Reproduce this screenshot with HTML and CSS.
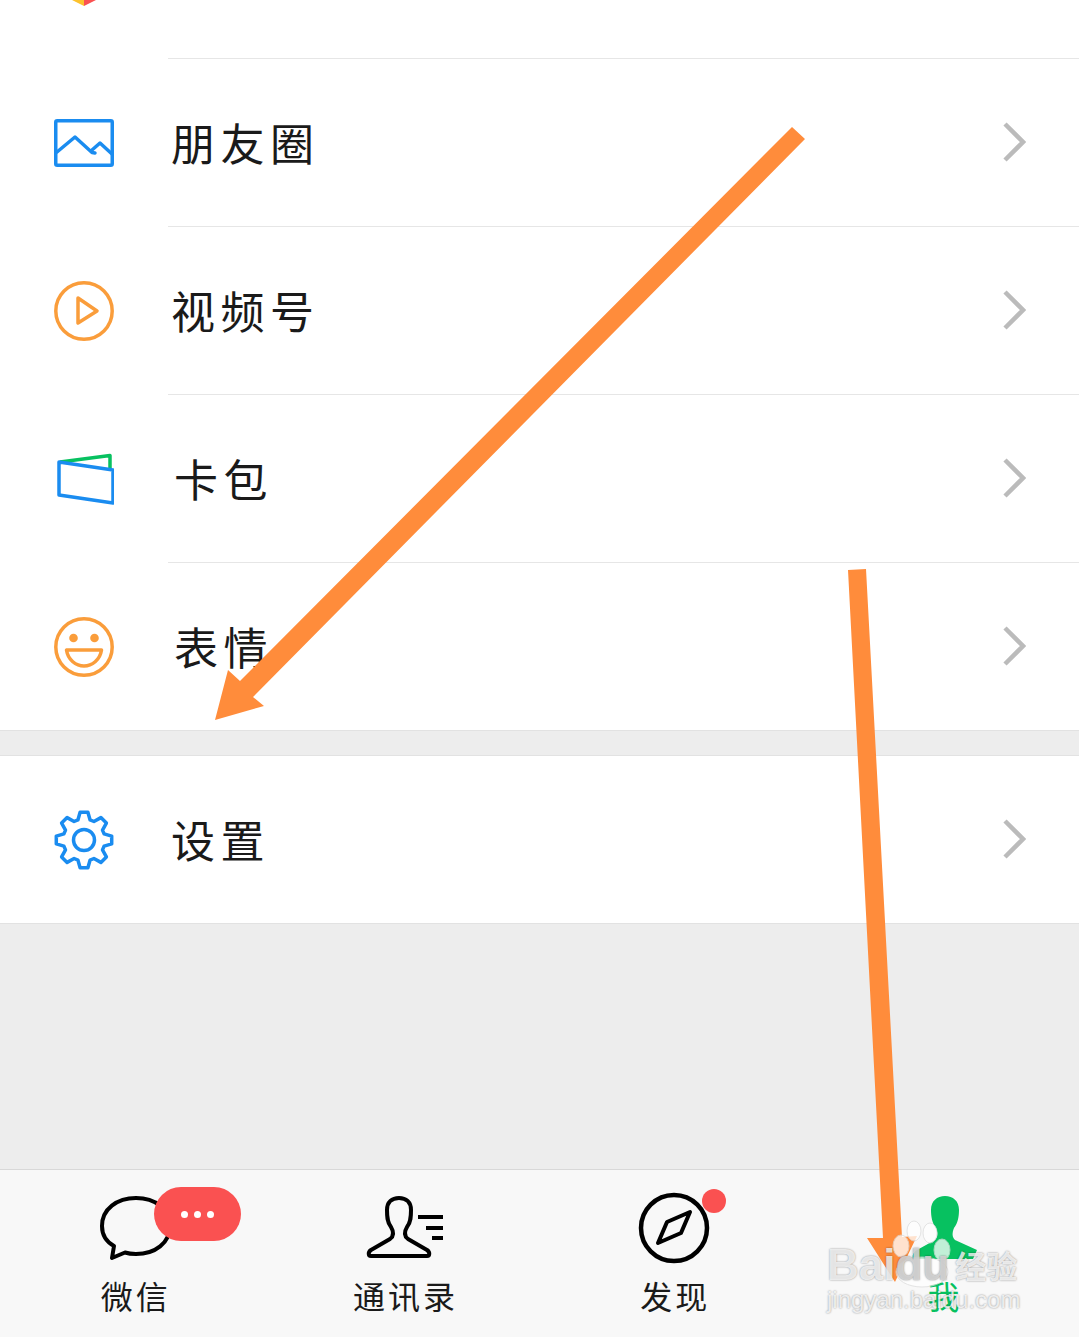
FILE: index.html
```html
<!DOCTYPE html>
<html lang="zh-CN">
<head>
    <meta charset="UTF-8">
    <meta name="viewport" content="width=device-width, initial-scale=1.0">
    <title>我</title>
    <link rel="stylesheet" href="styles.css">
</head>
<body>

<div class="page">
    <!-- Row cut off by the top of the screen -->
    <div class="stub">
        <svg class="stub-icon" width="24" height="8" viewBox="0 0 24 8">
            <path d="M0 0L12 6V0Z" fill="#fcc22d"/>
            <path d="M12 0V6L24 0Z" fill="#fa5151"/>
        </svg>
    </div>

    <div class="group">
        <div class="row">
            <div class="row-icon">
                <svg width="60" height="48" viewBox="0 0 60 48" fill="none" stroke="#1a8cf0" stroke-width="3.5" stroke-linejoin="round" stroke-linecap="round">
                    <rect x="1.75" y="1.75" width="56.5" height="44.5" rx="1.5"/>
                    <path d="M3 33L21 18L38 33.5L41 34"/>
                    <path d="M38 31L46 24L58 35"/>
                </svg>
            </div>
            <div class="row-body">
                <span class="row-label">朋友圈</span>
                <svg class="chevron" width="24" height="42" viewBox="0 0 24 42"><path d="M3 3L21 21L3 39"/></svg>
            </div>
        </div>
        <div class="row">
            <div class="row-icon">
                <svg width="60" height="60" viewBox="0 0 60 60" fill="none" stroke="#fa9d3b" stroke-width="3.5" stroke-linejoin="round">
                    <circle cx="30" cy="30" r="28.2"/>
                    <path d="M24 17L43 30L24 42Z"/>
                </svg>
            </div>
            <div class="row-body">
                <span class="row-label">视频号</span>
                <svg class="chevron" width="24" height="42" viewBox="0 0 24 42"><path d="M3 3L21 21L3 39"/></svg>
            </div>
        </div>
        <div class="row">
            <div class="row-icon">
                <svg width="60" height="52" viewBox="0 0 60 52" fill="none" stroke-width="3.5" stroke-linejoin="round">
                    <path d="M6 9L56 2.5V15" stroke="#07c160"/>
                    <path d="M5 9L59 17V50L5 42Z" stroke="#1a8cf0"/>
                </svg>
            </div>
            <div class="row-body">
                <span class="row-label label-inset">卡包</span>
                <svg class="chevron" width="24" height="42" viewBox="0 0 24 42"><path d="M3 3L21 21L3 39"/></svg>
            </div>
        </div>
        <div class="row">
            <div class="row-icon">
                <svg width="60" height="60" viewBox="0 0 60 60" fill="none" stroke="#fa9d3b" stroke-width="3.5" stroke-linejoin="round">
                    <circle cx="30" cy="30" r="28.2"/>
                    <circle cx="19.5" cy="21" r="4.3" fill="#fa9d3b" stroke="none"/>
                    <circle cx="40.5" cy="21" r="4.3" fill="#fa9d3b" stroke="none"/>
                    <path d="M12.5 33H47.5C46 43 38 49 30 49S14 43 12.5 33Z"/>
                </svg>
            </div>
            <div class="row-body">
                <span class="row-label label-inset">表情</span>
                <svg class="chevron" width="24" height="42" viewBox="0 0 24 42"><path d="M3 3L21 21L3 39"/></svg>
            </div>
        </div>
    </div>

    <div class="group group-settings">
        <div class="row">
            <div class="row-icon">
                <svg width="60" height="60" viewBox="0 0 60 60" fill="none" stroke="#1a8cf0" stroke-width="3.5" stroke-linejoin="round">
                    <path d="M26.1 2.3H33.9L36.1 9.9L39.9 11.5L46.9 7.6L52.4 13.1L48.5 20.1L50.1 23.9L57.7 26.1V33.9L50.1 36.1L48.5 39.9L52.4 46.9L46.9 52.4L39.9 48.5L36.1 50.1L33.9 57.7H26.1L23.9 50.1L20.1 48.5L13.1 52.4L7.6 46.9L11.5 39.9L9.9 36.1L2.3 33.9V26.1L9.9 23.9L11.5 20.1L7.6 13.1L13.1 7.6L20.1 11.5L23.9 9.9Z"/>
                    <circle cx="30" cy="30" r="10.5"/>
                </svg>
            </div>
            <div class="row-body">
                <span class="row-label">设置</span>
                <svg class="chevron" width="24" height="42" viewBox="0 0 24 42"><path d="M3 3L21 21L3 39"/></svg>
            </div>
        </div>
    </div>

    <div class="spacer"></div>

    <!-- Bottom tabs -->
    <div class="tabbar">
        <div class="tab">
            <svg class="tab-icon" width="74" height="68" viewBox="-1 0 74 68" fill="none" stroke="#000" stroke-width="4" stroke-linejoin="round">
                <path d="M15 52C6 47 3 40 3 32C3 15 18 4 37 4C56 4 71 15 71 32C71 49 56 60 37 60C33 60 29 59.5 26 58.5L13 64Z"/>
            </svg>
            <span class="tab-label">微信</span>
            <div class="badge-pill"><i></i><i></i><i></i></div>
        </div>
        <div class="tab">
            <svg class="tab-icon" width="78" height="68" viewBox="0 0 78 68" fill="none" stroke="#000" stroke-width="4" stroke-linejoin="round">
                <path d="M5 62C2 62 2 58 5 56L24 45C28 42 28 38 25 33C21 28 21 22 21 16C21 8 26 4 33 4C40 4 45 8 45 16C45 22 45 28 41 33C38 38 38 42 42 45L61 56C64 58 64 62 61 62Z"/>
                <path d="M52 23H77M60 34H77M66 44H77"/>
            </svg>
            <span class="tab-label">通讯录</span>
        </div>
        <div class="tab">
            <svg class="tab-icon icon-bleed" width="72" height="68" viewBox="0 2 72 68" fill="none" stroke="#000" stroke-width="4.5" stroke-linejoin="round">
                <circle cx="36" cy="36" r="33"/>
                <path d="M52 20L43 41L20 51L29 30Z" stroke-width="4"/>
            </svg>
            <span class="tab-label">发现</span>
            <div class="badge-dot"></div>
        </div>
        <div class="tab tab-active">
            <svg class="tab-icon" width="78" height="68" viewBox="-6 0 78 68" fill="#07c160">
                <path d="M2 65C1 60 3 58 6 56L24 46C27 43 27 39 25 34C21 29 20 22 20 16C20 7 26 2 34 2C42 2 48 7 48 16C48 22 47 29 43 34C41 39 41 43 44 46L66 56L62 65Z"/>
            </svg>
            <span class="tab-label">我</span>
        </div>
    </div>

    <!-- Arrows drawn over the screenshot, watermark on top of them -->
    <svg class="overlay" width="1079" height="1337" viewBox="0 0 1079 1337">
        <polygon points="792,127 805,139 253,697 264,706 215,720 228,670 240,681" fill="#ff8c3b"/>
        <polygon points="848,570 866,569 902,1237 917,1236 895,1282 867,1238 883,1238" fill="#ff8c3b"/>
        <g fill="#fff" stroke="#ddd" opacity="0.75">
            <ellipse cx="914" cy="1231" rx="7" ry="10"/>
            <ellipse cx="930" cy="1233" rx="7" ry="10"/>
            <ellipse cx="901" cy="1246" rx="8" ry="11"/>
            <ellipse cx="942" cy="1250" rx="8" ry="11"/>
            <ellipse cx="922" cy="1272" rx="26" ry="15"/>
        </g>
    </svg>
    <div class="watermark">
        <div class="wm-brand">Bai<span class="wm-du">du</span><span class="wm-cn">经验</span></div>
        <div class="wm-url">jingyan.baidu.com</div>
    </div>
</div>

</body>
</html>
```

FILE: styles.css
```css
body {
    margin: 0;
    background-color: #ededed;
    font-family: "Noto Sans CJK SC", "Liberation Sans", sans-serif;
    color: #1a1a1a;
}
.page {
    position: relative;
    display: flex;
    flex-direction: column;
    width: 1079px;
    height: 1337px;
    overflow: hidden;
}

.stub {
    height: 58px;
    background: #fff;
    padding-left: 72px;
}
.stub-icon {
    display: block;
}

.group {
    background: #fff;
    border-bottom: 1px solid #e2e2e2;
}
.group-settings {
    margin-top: 24px;
    border-top: 1px solid #e2e2e2;
}
.row {
    display: flex;
    height: 168px;
}
.group-settings .row {
    height: 167px;
}
.group-settings .row-icon {
    padding-top: 0;
}
.group-settings .row-body {
    border-top: none;
}
.row-icon {
    display: flex;
    align-items: center;
    justify-content: center;
    width: 168px;
    padding-top: 2px;
}
.row-body {
    flex: 1;
    display: flex;
    align-items: center;
    justify-content: space-between;
    padding: 0 53px 2px 3px;
    border-top: 1px solid #e6e6e6;
}
.row-label {
    font-size: 44px;
    letter-spacing: 5.5px;
    font-weight: 400;
}
.label-inset {
    padding-left: 3px;
}
.chevron {
    fill: none;
    stroke: #bbb;
    stroke-width: 4.5;
}

.spacer {
    flex: 1;
}

.tabbar {
    display: grid;
    grid-template-columns: repeat(4, 1fr);
    height: 167px;
    background: #f8f8f8;
    border-top: 1px solid #d8d8d8;
}
.tab {
    position: relative;
    display: flex;
    flex-direction: column;
    align-items: center;
    padding-top: 24px;
}
.tab-icon {
    display: block;
    height: 68px;
}
.icon-bleed {
    overflow: visible;
}
.tab-label {
    margin-top: 12px;
    padding-left: 2px;
    font-size: 32px;
    line-height: 42px;
    letter-spacing: 3px;
}
.tab-active .tab-label {
    color: #07c160;
}
.badge-pill {
    position: absolute;
    left: 154px;
    top: 17px;
    display: flex;
    align-items: center;
    justify-content: center;
    gap: 6px;
    width: 87px;
    height: 54px;
    border-radius: 27px;
    background: #fa5151;
}
.badge-pill i {
    width: 7px;
    height: 7px;
    border-radius: 50%;
    background: #fff;
}
.badge-dot {
    position: absolute;
    left: 162px;
    top: 19px;
    width: 24px;
    height: 24px;
    border-radius: 50%;
    background: #fa5151;
}

.overlay {
    position: absolute;
    left: 0;
    top: 0;
}
.watermark {
    position: absolute;
    left: 827px;
    top: 1240px;
    color: rgba(255, 255, 255, 0.8);
    font-family: "Liberation Sans", sans-serif;
    text-shadow: 0 0 2px rgba(0, 0, 0, 0.45);
}
.wm-brand {
    display: flex;
    align-items: center;
    font-size: 44px;
    line-height: 50px;
    font-weight: 700;
}
.wm-du {
    color: rgba(215, 215, 215, 0.9);
}
.wm-cn {
    margin-left: 6px;
    font-family: "Noto Sans CJK SC", sans-serif;
    font-size: 31px;
}
.wm-url {
    margin-top: -2px;
    font-size: 24px;
    line-height: 24px;
}
```
